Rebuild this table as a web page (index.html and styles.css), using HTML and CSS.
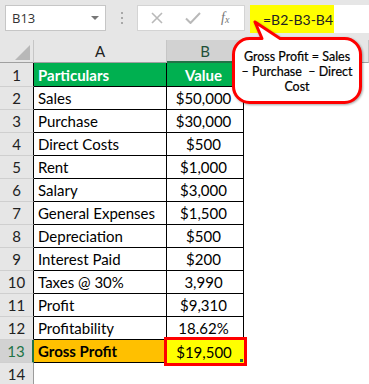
FILE: index.html
```html
<!DOCTYPE html>
<html>
<head>
<meta charset="utf-8">
<link rel="stylesheet" href="styles.css">
</head>
<body>
<div class="toolbar">
  <div class="namebox"><span class="nb-text">B13</span><span class="nb-arrow"></span></div>
  <div class="sep"><i></i><i></i><i></i></div>
  <div class="btns">
    <svg class="ic-x" width="12" height="12" viewBox="0 0 12 12"><path d="M1 1L11 11M11 1L1 11" stroke="#b9b9b9" stroke-width="1.6" fill="none"/></svg>
    <svg class="ic-ok" width="16" height="12" viewBox="0 0 16 12"><path d="M1 6.5L5.5 11L15 1" stroke="#b9b9b9" stroke-width="2" fill="none"/></svg>
    <span class="fx">f<sub>x</sub></span>
  </div>
  <div class="formula"><span class="hl">=B2-B3-B4</span></div>
</div>

<div class="sheet">
  <div class="corner"><span class="tri"></span></div>
  <div class="colh">A</div>
  <div class="colh sel">B</div>
  <div class="colh rest"></div>

  <div class="rh dark r1">1</div><div class="c ca hd r1">Particulars</div><div class="c cb hd r1">Value</div><div class="e r1"></div>
  <div class="rh dark">2</div><div class="c ca">Sales</div><div class="c cb">$50,000</div><div class="e"></div>
  <div class="rh dark">3</div><div class="c ca">Purchase</div><div class="c cb">$30,000</div><div class="e"></div>
  <div class="rh dark">4</div><div class="c ca">Direct Costs</div><div class="c cb">$500</div><div class="e"></div>
  <div class="rh dark">5</div><div class="c ca">Rent</div><div class="c cb">$1,000</div><div class="e"></div>
  <div class="rh dark">6</div><div class="c ca">Salary</div><div class="c cb">$3,000</div><div class="e"></div>
  <div class="rh dark">7</div><div class="c ca">General Expenses</div><div class="c cb">$1,500</div><div class="e"></div>
  <div class="rh dark">8</div><div class="c ca">Depreciation</div><div class="c cb">$500</div><div class="e"></div>
  <div class="rh dark">9</div><div class="c ca">Interest Paid</div><div class="c cb">$200</div><div class="e"></div>
  <div class="rh dark">10</div><div class="c ca">Taxes @ 30%</div><div class="c cb">3,990</div><div class="e"></div>
  <div class="rh dark">11</div><div class="c ca">Profit</div><div class="c cb">$9,310</div><div class="e"></div>
  <div class="rh dark">12</div><div class="c ca">Profitability</div><div class="c cb">18.62%</div><div class="e"></div>
  <div class="rh selrow">13</div><div class="c ca gp">Gross Profit</div><div class="c cb active">$19,500<span class="handle"></span></div><div class="e"></div>
  <div class="rh">14</div><div class="n"></div><div class="n"></div><div class="e"></div>
</div>

<div class="callout">
  <svg class="bubble" width="140" height="92" viewBox="0 0 140 92">
    <path d="M21.5 20.5 L34 20.5 L27 4 L52 20.5 L116.5 20.5 A16 16 0 0 1 132.5 36.5 L132.5 68.5 A16 16 0 0 1 116.5 84.5 L21.5 84.5 A16 16 0 0 1 5.5 68.5 L5.5 36.5 A16 16 0 0 1 21.5 20.5 Z" fill="#ffffff" stroke="#ff0000" stroke-width="3" stroke-linejoin="round"/>
  </svg>
  <div class="ctext">Gross Profit = Sales<br>– Purchase &nbsp;– Direct<br>Cost</div>
</div>
</body>
</html>
```

FILE: styles.css
```css
* { box-sizing: border-box; }
html, body { margin: 0; padding: 0; background: #ffffff; }
body {
  width: 369px;
  height: 384px;
  overflow: hidden;
  position: relative;
  font-family: Lato, "Open Sans", sans-serif;
  color: #000;
}

.toolbar {
  height: 40px;
  background: #e6e6e6;
  display: flex;
  align-items: flex-start;
  padding: 5px 0 0 5px;
}
.namebox {
  width: 101px;
  height: 26px;
  background: #fff;
  border: 1px solid #c6c6c6;
  display: flex;
  align-items: center;
  justify-content: space-between;
  padding: 0 6px 0 6px;
}
.nb-text { font-family: "Open Sans", sans-serif; font-size: 13px; color: #333; }
.nb-arrow {
  width: 0; height: 0;
  border-left: 4px solid transparent;
  border-right: 4px solid transparent;
  border-top: 4px solid #777;
}
.sep {
  width: 31px;
  height: 26px;
  display: flex;
  flex-direction: column;
  align-items: center;
  justify-content: center;
  gap: 3px;
}
.sep i { width: 2px; height: 2px; background: #a8a8a8; display: block; }
.btns {
  width: 108px;
  height: 26px;
  background: #fff;
  border: 1px solid #d4d4d4;
  display: flex;
  align-items: center;
  padding-left: 13px;
}
.ic-x { margin-right: 22px; }
.ic-ok { margin-right: 20px; }
.fx {
  font-family: "Liberation Serif", serif;
  font-style: italic;
  font-size: 14px;
  color: #777;
}
.fx sub { font-size: 10px; vertical-align: -1px; }
.formula {
  flex: 1;
  height: 28px;
  margin-left: 5px;
  background: #fff;
  display: flex;
}
.hl {
  display: flex;
  align-items: center;
  flex: 0 0 84px;
  height: 28px;
  background: #ffff00;
  padding-left: 13px;
  font-size: 14px;
  color: #222;
  white-space: nowrap;
}

.sheet {
  display: grid;
  grid-template-columns: 34px 133px 77px 1fr;
  grid-template-rows: 23px 24px repeat(13, 23px);
}
.corner {
  background: #e6e6e6;
  border-right: 1px solid #c6c6c6;
  border-bottom: 1px solid #a0a0a0;
  position: relative;
}
.tri {
  position: absolute;
  right: 3px;
  bottom: 2px;
  width: 0; height: 0;
  border-left: 15px solid transparent;
  border-bottom: 15px solid #b8b8b8;
}
.colh {
  background: #e6e6e6;
  border-right: 1px solid #c6c6c6;
  border-bottom: 1px solid #a0a0a0;
  display: flex;
  align-items: center;
  justify-content: center;
  font-size: 15px;
  color: #222;
}
.colh.sel {
  background: #d2d2d2;
  border-bottom: 2px solid #217346;
  color: #1f4f38;
}

.rh {
  background: #e6e6e6;
  border-right: 1px solid #9b9b9b;
  border-bottom: 1px solid #cfcfcf;
  display: flex;
  align-items: center;
  justify-content: center;
  font-size: 15px;
  color: #222;
}
.rh.dark { border-right-color: #000; }
.rh.selrow {
  background: #d2d2d2;
  border-right: 2px solid #217346;
  color: #217346;
}

.c {
  border-right: 1px solid #000;
  border-bottom: 1px solid #000;
  display: flex;
  align-items: center;
  font-size: 15px;
  white-space: nowrap;
}
.ca { padding-left: 4px; }
.cb { justify-content: center; padding-right: 3px; }
.hd {
  background: #00b050;
  color: #fff;
  font-weight: bold;
}
.gp {
  background: #ffc000;
  font-weight: bold;
}
.active {
  background: #ffff00;
  position: relative;
  border-right: none;
  border-bottom: none;
}
.active::after {
  content: "";
  position: absolute;
  left: -3px;
  top: -3px;
  right: -3px;
  bottom: -3px;
  border: 3px solid #ff0000;
}
.handle {
  position: absolute;
  right: 1px;
  bottom: 1px;
  width: 3px;
  height: 3px;
  background: #217346;
}
.e { background: #fff; }
.n { background: #fff; }

.callout {
  position: absolute;
  left: 228px;
  top: 18px;
  width: 140px;
  height: 92px;
}
.bubble {
  position: absolute;
  left: 0;
  top: 0;
  filter: drop-shadow(1px 1.5px 1px rgba(0,0,0,0.35));
}
.ctext {
  position: absolute;
  left: 0;
  top: 31px;
  width: 138px;
  text-align: center;
  font-size: 12.5px;
  line-height: 15px;
  color: #000;
  -webkit-text-stroke: 0.2px #000;
}
```
